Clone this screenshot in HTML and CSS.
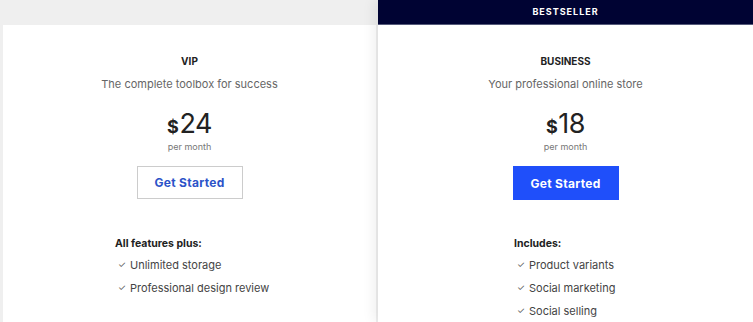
FILE: index.html
```html
<!DOCTYPE html>
<html>
<head>
<meta charset="utf-8">
<link rel="stylesheet" href="styles.css">
</head>
<body>
<div class="plans">
  <div class="card">
    <div class="body">
      <div class="name">VIP</div>
      <div class="tagline">The complete toolbox for success</div>
      <div class="price"><span class="cur">$</span>24</div>
      <div class="per">per month</div>
      <a class="btn outline">Get Started</a>
      <div class="features">
        <div class="fhead">All features plus:</div>
        <ul>
          <li><span class="chk">✓</span>Unlimited storage</li>
          <li><span class="chk">✓</span>Professional design review</li>
        </ul>
      </div>
    </div>
  </div>
  <div class="card featured">
    <div class="badge">BESTSELLER</div>
    <div class="body">
      <div class="name">BUSINESS</div>
      <div class="tagline">Your professional online store</div>
      <div class="price"><span class="cur">$</span>18</div>
      <div class="per">per month</div>
      <a class="btn solid">Get Started</a>
      <div class="features">
        <div class="fhead">Includes:</div>
        <ul>
          <li><span class="chk">✓</span>Product variants</li>
          <li><span class="chk">✓</span>Social marketing</li>
          <li><span class="chk">✓</span>Social selling</li>
        </ul>
      </div>
    </div>
  </div>
</div>
</body>
</html>
```
FILE: styles.css
```css
html, body {
  margin: 0;
  padding: 0;
  background: #efefef;
  height: 322px;
  overflow: hidden;
  font-family: Inter, "Noto Sans", sans-serif;
  color: #333;
}
.plans {
  display: flex;
  padding-left: 3px;
  gap: 2px;
  align-items: flex-start;
}
.card {
  background: #fff;
  width: 373px;
  height: 297px;
  margin-top: 25px;
  overflow: hidden;
}
.card.featured {
  width: 375px;
  height: 322px;
  margin-top: 0;
  overflow: visible;
  box-shadow: -4px 0 12px rgba(0,0,0,0.07);
}
.badge {
  background: #000333;
  color: #fff;
  font-size: 9px;
  font-weight: 700;
  letter-spacing: 1px;
  height: 24px;
  line-height: 24px;
  text-align: center;
  border-bottom: 1px solid #555a7a;
}
.body {
  display: flex;
  flex-direction: column;
  align-items: center;
  padding-top: 30px;
}
.name {
  font-size: 10px;
  font-weight: 700;
  color: #222;
  line-height: 12px;
}
.tagline {
  margin-top: 10px;
  font-size: 11px;
  color: #666;
  line-height: 14px;
}
.price {
  margin-top: 17px;
  font-size: 27px;
  line-height: 32px;
  color: #222;
  font-weight: 400;
  letter-spacing: -0.5px;
}
.cur {
  font-size: 18px;
  font-weight: 700;
  margin-right: 1px;
}
.per {
  font-size: 9px;
  color: #777;
  line-height: 12px;
  margin-top: -2px;
}
.btn {
  margin-top: 13px;
  width: 106px;
  height: 33px;
  box-sizing: border-box;
  display: flex;
  align-items: center;
  justify-content: center;
  font-size: 12px;
  font-weight: 700;
  letter-spacing: 0.3px;
}
.btn.outline {
  border: 1px solid #ccc;
  color: #2b53c8;
}
.btn.solid {
  height: 34px;
  background: #1f4ffa;
  color: #fff;
}
.features {
  align-self: flex-start;
  margin-top: 38px;
  margin-left: 112px;
}
.solid + .features {
  margin-top: 37px;
}
.featured .features {
  margin-left: 136px;
}
.fhead {
  font-size: 10.5px;
  font-weight: 700;
  color: #222;
  line-height: 14px;
}
ul {
  list-style: none;
  margin: -2px 0 0;
  padding: 0;
}
li {
  font-size: 11px;
  color: #444;
  line-height: 14px;
  margin-top: 9px;
  display: flex;
  align-items: center;
}
.chk {
  font-size: 9px;
  color: #555;
  width: 12px;
  margin-left: 3px;
}
```
